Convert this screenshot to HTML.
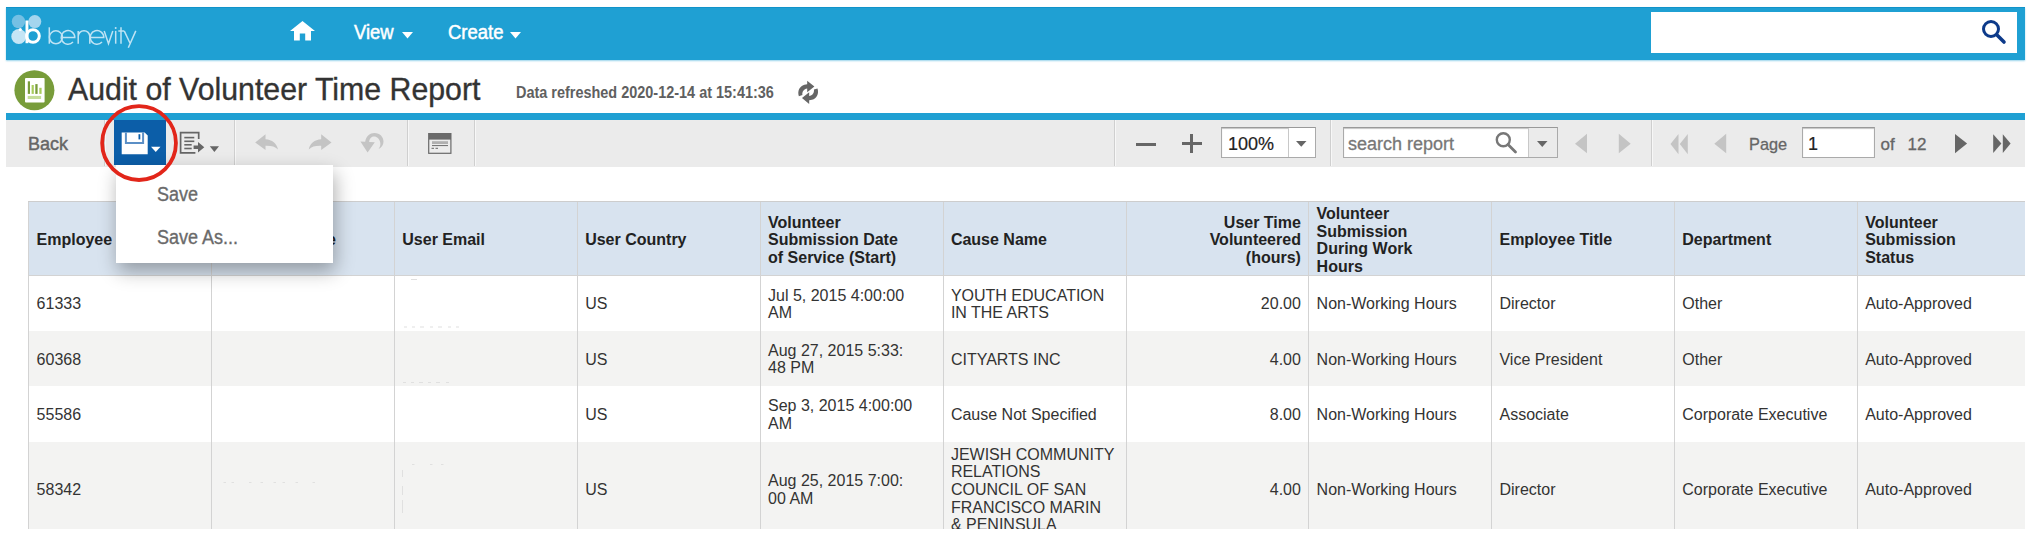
<!DOCTYPE html>
<html><head><meta charset="utf-8">
<style>
html,body{margin:0;padding:0;width:2036px;height:538px;overflow:hidden;background:#fff;font-family:"Liberation Sans",sans-serif;}
.a{position:absolute;}
.t{position:absolute;white-space:nowrap;line-height:1;}
#hdr{left:6px;top:7px;width:2019px;height:53.4px;background:#1fa0d3;border-top:1px solid #1193c9;box-sizing:border-box;box-shadow:0 1px 1.5px rgba(31,160,211,0.45);}
#srch{left:1651px;top:12px;width:366px;height:41px;background:#fff;}
#stripe{left:6px;top:113px;width:2019px;height:7px;background:#1fa0d3;}
#tb{left:6px;top:120px;width:2019px;height:47px;background:#ebebeb;}
.sep{position:absolute;top:120px;width:1px;height:46px;background:#cfcfcf;box-shadow:1px 0 0 #f7f7f7;}

#tbl{position:absolute;left:28.4px;top:201px;width:1997px;height:327.6px;overflow:hidden;}
.row{position:absolute;left:0;width:2020px;}
.c{position:absolute;top:0;height:100%;box-sizing:border-box;display:flex;align-items:center;padding-left:7.2px;padding-top:2px;font-size:16px;line-height:17.65px;color:#333;border-left:1px solid #d3d3d3;}
.h .c{font-weight:bold;color:#222;padding-top:3.4px;}
.c.r{justify-content:flex-end;padding-left:0;padding-right:7.5px;text-align:right;}
</style></head><body>
<div id="hdr" class="a"></div>
<!-- logo -->
<svg class="a" style="left:6px;top:10px" width="40" height="40" viewBox="0 0 40 40">
  <circle cx="12.5" cy="11.5" r="6.7" fill="#74c0e4"/>
  <circle cx="28.8" cy="11.6" r="6.5" fill="#a4d5ee"/>
  <circle cx="12.8" cy="26.5" r="7.5" fill="#c5e5f5"/>
  <circle cx="14.3" cy="19.5" r="1.5" fill="#fff"/>
  <circle cx="27" cy="26" r="6.3" fill="none" stroke="#fff" stroke-width="3"/>
  <rect x="19.5" y="10.5" width="2.9" height="22.7" fill="#fff"/>
</svg>
<svg class="a" style="left:40px;top:20px" width="110" height="34" viewBox="40 20 110 34">
 <g fill="none" stroke="#bfe3f4" stroke-width="1.5">
  <path d="M49.3 27.3 V43.7"/>
  <circle cx="55.9" cy="37.3" r="6.5"/>
  <path d="M62 37.6 H74.8 A6.8 6.8 0 1 0 73 42"/>
  <path d="M78.2 31 V43.7 M78.2 36.5 A5.8 5.8 0 0 1 89.8 36.5 V43.7"/>
  <path d="M90.8 37.6 H103.8 A6.8 6.8 0 1 0 102 42"/>
  <path d="M104.2 30.9 L108.5 43.7 L112.8 30.9"/>
  <path d="M115.7 30.9 V43.7"/>
  <path d="M121 27.3 V43.7 M118.3 31 H124"/>
  <path d="M124.2 30.9 L130.3 43.7 M135.8 30.9 L128.3 47.8"/>
 </g>
 <circle cx="115.7" cy="28.1" r="1" fill="#bfe3f4"/>
</svg>
<!-- nav -->
<svg class="a" style="left:290px;top:21px" width="25" height="20" viewBox="0 0 25 20">
  <path d="M12.5 0 L25 10 L21 10 L21 19.6 L15.2 19.6 L15.2 12.4 L9.8 12.4 L9.8 19.6 L4 19.6 L4 10 L0 10 Z" fill="#fff"/>
</svg>
<div class="t" id="nav1" style="left:354px;top:21.5px;font-size:20px;color:#fff;-webkit-text-stroke:0.5px #fff;transform:scaleX(0.92);transform-origin:0 0;">View</div>
<svg class="a" style="left:402px;top:32px" width="11" height="7"><path d="M0 0 L11 0 L5.5 6.5Z" fill="#fff"/></svg>
<div class="t" id="nav2" style="left:447.6px;top:21.5px;font-size:20px;color:#fff;-webkit-text-stroke:0.5px #fff;transform:scaleX(0.924);transform-origin:0 0;">Create</div>
<svg class="a" style="left:510px;top:32px" width="11" height="7"><path d="M0 0 L11 0 L5.5 6.5Z" fill="#fff"/></svg>
<div id="srch" class="a"></div>
<svg class="a" style="left:1980px;top:18px" width="28" height="28" viewBox="0 0 28 28">
  <circle cx="11" cy="11" r="7.5" fill="none" stroke="#0d3a8a" stroke-width="3"/>
  <path d="M17 17 L24 24" stroke="#0d3a8a" stroke-width="3.6" stroke-linecap="round"/>
</svg>

<!-- title row -->
<svg class="a" style="left:14px;top:70px" width="41" height="41" viewBox="0 0 41 41">
  <circle cx="20.4" cy="20.2" r="20" fill="#789c3a"/>
  <rect x="11" y="8" width="19.6" height="24.4" rx="1" fill="#fff"/>
  <rect x="13.8" y="11.3" width="2.2" height="12.6" fill="#789c3a"/>
  <rect x="17.6" y="15" width="2.2" height="8.9" fill="#a8cc5c"/>
  <rect x="21.3" y="14.1" width="2.3" height="9.8" fill="#789c3a"/>
  <rect x="25.3" y="17.8" width="2.3" height="6.1" fill="#a8cc5c"/>
  <rect x="13.7" y="25.9" width="13.4" height="3.1" fill="#c5dd9a"/>
</svg>
<div class="t" id="title" style="left:67.5px;top:73.8px;font-size:31.1px;color:#333;-webkit-text-stroke:0.35px #333;transform:scaleX(0.974);transform-origin:0 0;">Audit of Volunteer Time Report</div>
<div class="t" id="refr" style="left:516px;top:84.5px;font-size:16.7px;font-weight:bold;color:#606060;transform:scaleX(0.866);transform-origin:0 0;">Data refreshed 2020-12-14 at 15:41:36</div>

<div id="stripe" class="a"></div>
<div id="tb" class="a"></div>
<div class="t" id="back" style="left:28px;top:135px;font-size:18px;color:#666;-webkit-text-stroke:0.45px #666;">Back</div>


<div class="sep" style="left:104px"></div>
<div class="sep" style="left:234px"></div>
<div class="sep" style="left:407px"></div>
<div class="sep" style="left:474px"></div>
<div class="sep" style="left:1114px"></div>
<div class="sep" style="left:1330px"></div>
<div class="sep" style="left:1651px"></div>
<!-- save button -->
<div class="a" style="left:114px;top:120px;width:52.3px;height:44.7px;background:#0c5ea8;"></div>
<svg class="a" style="left:114px;top:120px" width="52" height="44" viewBox="0 0 52 44">
  <path d="M7.7 12.4 L30.7 12.4 L33.7 15.4 L33.7 34.2 L7.7 34.2 Z" fill="#fff"/>
  <path d="M11.9 12.4 L11.9 23.1 L29.1 23.1 L29.1 12.4" fill="none" stroke="#5b8fc6" stroke-width="2"/>
  <rect x="24.5" y="14.2" width="1.8" height="5.2" fill="#0c5ea8"/>
  <path d="M37 26.8 L46.5 26.8 L41.75 31.9 Z" fill="#fff"/>
</svg>
<!-- export -->
<svg class="a" style="left:172px;top:122px" width="60" height="40" viewBox="0 0 60 40">
  <path d="M26.7 17.1 L26.7 10.7 L8.6 10.7 L8.6 30.8 L23.4 30.8" fill="none" stroke="#666" stroke-width="1.7"/>
  <rect x="12.3" y="14.8" width="10" height="1.6" fill="#666"/>
  <rect x="12.3" y="18.5" width="10" height="1.6" fill="#666"/>
  <rect x="12.3" y="22" width="7.4" height="1.6" fill="#666"/>
  <rect x="12.3" y="25.7" width="7.4" height="1.6" fill="#666"/>
  <path d="M21.6 23.4 L26 23.4 L26 20 L32.3 25.3 L26 30.5 L26 27.1 L21.6 27.1 Z" fill="#666"/>
  <path d="M37.8 24.2 L47 24.2 L42.4 30.1 Z" fill="#666"/>
</svg>
<!-- undo redo revert -->
<svg class="a" style="left:250px;top:126px" width="140" height="34" viewBox="0 0 140 34">
  <path d="M5.2 16.5 L15.5 8.3 L15.5 13.2 C22 13.5 27 17.5 27.9 23.4 C25 20.5 21 19.6 15.5 19.8 L15.5 24.1 Z" fill="#c4c4c4"/>
  <path d="M81.5 16.5 L71.2 8.3 L71.2 13.2 C64.7 13.5 59.7 17.5 58.8 23.4 C61.7 20.5 65.7 19.6 71.2 19.8 L71.2 24.1 Z" fill="#c4c4c4"/>
  <path d="M117.6 26.5 L110.4 15.5 L115.2 15.8 C116 10 120 6.9 124.5 6.9 C130 6.9 133.5 11 133.5 15.5 C133.5 19 131.5 21.5 128.6 23 C130 21 130.6 19 130.3 17 C129.8 13 127 10.5 124 10.5 C121 10.5 119.3 13 119.2 16 L124.8 16.2 Z" fill="#c4c4c4"/>
</svg>
<!-- window icon -->
<svg class="a" style="left:420px;top:126px" width="40" height="34" viewBox="0 0 40 34">
  <rect x="8.1" y="7" width="23.4" height="20.9" fill="#6a6a6a"/>
  <rect x="9.3" y="13.6" width="21" height="13.1" fill="#ececec"/>
  <rect x="12" y="15.2" width="16" height="2.8" fill="#b0b0b0"/>
  <rect x="12" y="19" width="16" height="1.1" fill="#777"/>
  <rect x="11.5" y="21.8" width="2.5" height="1" fill="#666"/>
  <rect x="15.5" y="21.8" width="2.5" height="1" fill="#666"/>
</svg>
<div id="tbl">
<div class="row h" style="top:0px;height:75px;background:#d8e3ef;border-top:1px solid #cdcdcd;border-bottom:1px solid #d3d3d3;box-sizing:border-box;"><div class="c" style="left:0.0px;width:182.86px">Employee ID</div><div class="c" style="left:182.86px;width:182.86px">User Full Name</div><div class="c" style="left:365.72px;width:182.86px">User Email</div><div class="c" style="left:548.58px;width:182.86px">User Country</div><div class="c" style="left:731.44px;width:182.86px">Volunteer<br>Submission Date<br>of Service (Start)</div><div class="c" style="left:914.3px;width:182.86px">Cause Name</div><div class="c r" style="left:1097.16px;width:182.86px">User Time<br>Volunteered<br>(hours)</div><div class="c" style="left:1280.02px;width:182.86px">Volunteer<br>Submission<br>During Work<br>Hours</div><div class="c" style="left:1462.88px;width:182.86px">Employee Title</div><div class="c" style="left:1645.74px;width:182.86px">Department</div><div class="c" style="left:1828.6px;width:182.86px">Volunteer<br>Submission<br>Status</div></div>
<div class="row b" style="top:75px;height:54.6px;background:#ffffff;"><div class="c" style="left:0.0px;width:182.86px">61333</div><div class="c" style="left:182.86px;width:182.86px"></div><div class="c" style="left:365.72px;width:182.86px"></div><div class="c" style="left:548.58px;width:182.86px">US</div><div class="c" style="left:731.44px;width:182.86px">Jul 5, 2015 4:00:00<br>AM</div><div class="c" style="left:914.3px;width:182.86px">YOUTH EDUCATION<br>IN THE ARTS</div><div class="c r" style="left:1097.16px;width:182.86px">20.00</div><div class="c" style="left:1280.02px;width:182.86px">Non-Working Hours</div><div class="c" style="left:1462.88px;width:182.86px">Director</div><div class="c" style="left:1645.74px;width:182.86px">Other</div><div class="c" style="left:1828.6px;width:182.86px">Auto-Approved</div></div>
<div class="row b" style="top:129.6px;height:55.6px;background:#f3f3f2;"><div class="c" style="left:0.0px;width:182.86px">60368</div><div class="c" style="left:182.86px;width:182.86px"></div><div class="c" style="left:365.72px;width:182.86px"></div><div class="c" style="left:548.58px;width:182.86px">US</div><div class="c" style="left:731.44px;width:182.86px">Aug 27, 2015 5:33:<br>48 PM</div><div class="c" style="left:914.3px;width:182.86px">CITYARTS INC</div><div class="c r" style="left:1097.16px;width:182.86px">4.00</div><div class="c" style="left:1280.02px;width:182.86px">Non-Working Hours</div><div class="c" style="left:1462.88px;width:182.86px">Vice President</div><div class="c" style="left:1645.74px;width:182.86px">Other</div><div class="c" style="left:1828.6px;width:182.86px">Auto-Approved</div></div>
<div class="row b" style="top:185.2px;height:55.8px;background:#ffffff;"><div class="c" style="left:0.0px;width:182.86px">55586</div><div class="c" style="left:182.86px;width:182.86px"></div><div class="c" style="left:365.72px;width:182.86px"></div><div class="c" style="left:548.58px;width:182.86px">US</div><div class="c" style="left:731.44px;width:182.86px">Sep 3, 2015 4:00:00<br>AM</div><div class="c" style="left:914.3px;width:182.86px">Cause Not Specified</div><div class="c r" style="left:1097.16px;width:182.86px">8.00</div><div class="c" style="left:1280.02px;width:182.86px">Non-Working Hours</div><div class="c" style="left:1462.88px;width:182.86px">Associate</div><div class="c" style="left:1645.74px;width:182.86px">Corporate Executive</div><div class="c" style="left:1828.6px;width:182.86px">Auto-Approved</div></div>
<div class="row b" style="top:241px;height:93.4px;background:#f3f3f2;"><div class="c" style="left:0.0px;width:182.86px">58342</div><div class="c" style="left:182.86px;width:182.86px"></div><div class="c" style="left:365.72px;width:182.86px"></div><div class="c" style="left:548.58px;width:182.86px">US</div><div class="c" style="left:731.44px;width:182.86px">Aug 25, 2015 7:00:<br>00 AM</div><div class="c" style="left:914.3px;width:182.86px">JEWISH COMMUNITY<br>RELATIONS<br>COUNCIL OF SAN<br>FRANCISCO MARIN<br>&amp; PENINSULA</div><div class="c r" style="left:1097.16px;width:182.86px">4.00</div><div class="c" style="left:1280.02px;width:182.86px">Non-Working Hours</div><div class="c" style="left:1462.88px;width:182.86px">Director</div><div class="c" style="left:1645.74px;width:182.86px">Corporate Executive</div><div class="c" style="left:1828.6px;width:182.86px">Auto-Approved</div></div>
</div>
<!-- zoom -->
<div class="a" style="left:1135.5px;top:142.5px;width:20px;height:3px;background:#666;"></div>
<div class="a" style="left:1182px;top:142.3px;width:19.6px;height:3px;background:#666;"></div>
<div class="a" style="left:1190.4px;top:134.2px;width:3px;height:19.2px;background:#666;"></div>
<div class="a" style="left:1221px;top:126.5px;width:95px;height:31px;box-sizing:border-box;border:1px solid #aaa;border-top-color:#999;background:#fff;box-shadow:inset 0 1px 1px #c4c4c4;"></div>
<div class="a" style="left:1287.5px;top:127.5px;width:26.5px;height:29px;border-left:1px solid #c8c8c8;background:#fff;"></div>
<svg class="a" style="left:1296px;top:141px" width="11" height="6"><path d="M0 0 L10.5 0 L5.25 5.7Z" fill="#666"/></svg>
<div class="t" id="zoomtxt" style="left:1228px;top:135px;font-size:18px;color:#222;-webkit-text-stroke:0.2px #222;">100%</div>
<!-- search report -->
<div class="a" style="left:1343px;top:126.7px;width:215px;height:31px;box-sizing:border-box;border:1px solid #aaa;border-top-color:#999;background:#fff;box-shadow:inset 0 1px 1px #c4c4c4;"></div>
<div class="a" style="left:1527.5px;top:127.7px;width:28.5px;height:29px;border-left:1px solid #c8c8c8;background:#ebebeb;"></div>
<svg class="a" style="left:1537px;top:140.5px" width="11" height="7"><path d="M0 0 L10.5 0 L5.25 6Z" fill="#666"/></svg>
<div class="t" id="srtxt" style="left:1348px;top:135px;font-size:18px;color:#777;-webkit-text-stroke:0.3px #777;">search report</div>
<svg class="a" style="left:1494px;top:131px" width="24" height="23" viewBox="0 0 24 23">
  <circle cx="9.3" cy="8.8" r="6.5" fill="none" stroke="#777" stroke-width="2.4"/>
  <path d="M14 13.5 L21.5 21" stroke="#777" stroke-width="2.8" stroke-linecap="round"/>
</svg>
<svg class="a" style="left:1570px;top:130px" width="70" height="28" viewBox="0 0 70 28">
  <path d="M5 13.7 L17 3.8 L17 23.3 Z" fill="#c4c4c4"/>
  <path d="M48.8 3.8 L60.7 13.7 L48.8 23.3 Z" fill="#c4c4c4"/>
</svg>
<!-- pager -->
<svg class="a" style="left:1660px;top:130px" width="80" height="28" viewBox="0 0 80 28">
  <path d="M10.5 14 L18.5 4 L18.5 24.2 Z" fill="#c4c4c4"/>
  <path d="M19.8 14 L27.8 4 L27.8 24.2 Z" fill="#c4c4c4"/>
  <path d="M54.3 13.7 L66.2 3.8 L66.2 23.3 Z" fill="#c4c4c4"/>
</svg>
<div class="t" id="pagetxt" style="left:1749px;top:135.5px;font-size:17px;color:#666;-webkit-text-stroke:0.3px #666;transform:scaleX(0.96);transform-origin:0 0;">Page</div>
<div class="a" style="left:1802px;top:126.8px;width:72.6px;height:31px;box-sizing:border-box;border:1px solid #aaa;border-top-color:#999;background:#fff;box-shadow:inset 0 1px 1px #c4c4c4;"></div>
<div class="t" id="pgnum" style="left:1808px;top:135px;font-size:18px;color:#222;-webkit-text-stroke:0.2px #222;">1</div>
<div class="t" id="oftxt" style="left:1880.5px;top:135.5px;font-size:17px;color:#666;-webkit-text-stroke:0.3px #666;">of</div><div class="t" id="twelve" style="left:1907.5px;top:135.5px;font-size:17px;color:#666;-webkit-text-stroke:0.3px #666;">12</div>
<svg class="a" style="left:1950px;top:130px" width="70" height="28" viewBox="0 0 70 28">
  <path d="M5 3.9 L17.1 13.6 L5 23.3 Z" fill="#666"/>
  <path d="M43.2 4.3 L51.4 13.6 L43.2 22.9 Z" fill="#666"/>
  <path d="M52.8 4.3 L60.6 13.6 L52.8 22.9 Z" fill="#666"/>
</svg>

<div class="a" style="left:216.5px;top:287px;width:176px;height:43.5px;background:#fff;"></div>
<svg class="a" style="left:200px;top:270px" width="300" height="260" viewBox="200 270 300 260">
 <g fill="#e0e0e0">
  <rect x="411" y="279" width="6" height="1"/>
  <rect x="404" y="326.5" width="3" height="1"/><rect x="412" y="326.5" width="3" height="1"/><rect x="420" y="326.5" width="4" height="1"/><rect x="430" y="326.5" width="3" height="1"/><rect x="438" y="326.5" width="4" height="1"/><rect x="448" y="326.5" width="3" height="1"/><rect x="456" y="326.5" width="3" height="1"/>
  <rect x="403" y="382" width="3" height="1"/><rect x="411" y="382" width="3" height="1"/><rect x="419" y="382" width="4" height="1"/><rect x="428" y="382" width="3" height="1"/><rect x="436" y="382" width="4" height="1"/><rect x="446" y="382" width="3" height="1"/>
  <rect x="223.5" y="482" width="2.5" height="1"/><rect x="231.5" y="482" width="2.5" height="1"/><rect x="249" y="482" width="2.5" height="1"/><rect x="260.5" y="482" width="2.5" height="1"/><rect x="273.5" y="482" width="2.5" height="1"/><rect x="282.5" y="482" width="2.5" height="1"/><rect x="295.5" y="482" width="2.5" height="1"/><rect x="312.5" y="482" width="2.5" height="1"/>
  <rect x="402" y="470" width="1" height="7"/><rect x="402" y="486" width="1" height="9"/><rect x="402" y="500" width="1" height="13"/>
  <rect x="412" y="464" width="2.5" height="1"/><rect x="430" y="464" width="2.5" height="1"/><rect x="441" y="464" width="2.5" height="1"/>
 </g>
</svg>
<!-- refresh icon -->
<svg class="a" style="left:794.6px;top:78.6px" width="26.6" height="27.7" viewBox="0 0 24 25">
  <path d="M3.5 15.5 C2 11 4 6.5 8.5 5.2 L11 4.8 L11 1.5 L17.5 6.8 L11 12 L11 8.6 C8 9 6.3 11.5 6.7 14.5 Z" fill="#666"/>
  <path d="M20.3 8.5 C21.8 13 19.8 17.5 15.3 18.8 L12.8 19.2 L12.8 22.5 L6.3 17.2 L12.8 12 L12.8 15.4 C15.8 15 17.5 12.5 17.1 9.5 Z" fill="#666"/>
</svg>
<!-- menu -->
<div class="a" style="left:116px;top:165px;width:217px;height:98px;background:#fff;box-shadow:2px 8px 18px rgba(0,0,0,0.32);"></div>
<div class="t" id="m1" style="left:157px;top:184.3px;font-size:20px;color:#6a6a6a;-webkit-text-stroke:0.35px #6a6a6a;transform:scaleX(0.9);transform-origin:0 0;">Save</div>
<div class="t" id="m2" style="left:157px;top:227px;font-size:20px;color:#6a6a6a;-webkit-text-stroke:0.35px #6a6a6a;transform:scaleX(0.9);transform-origin:0 0;">Save As...</div>
<!-- red circle -->
<svg class="a" style="left:90px;top:95px" width="100" height="95" viewBox="0 0 100 95">
  <circle cx="49.05" cy="48.1" r="36.9" fill="none" stroke="#e2261a" stroke-width="3.8"/>
</svg>
</body></html>
